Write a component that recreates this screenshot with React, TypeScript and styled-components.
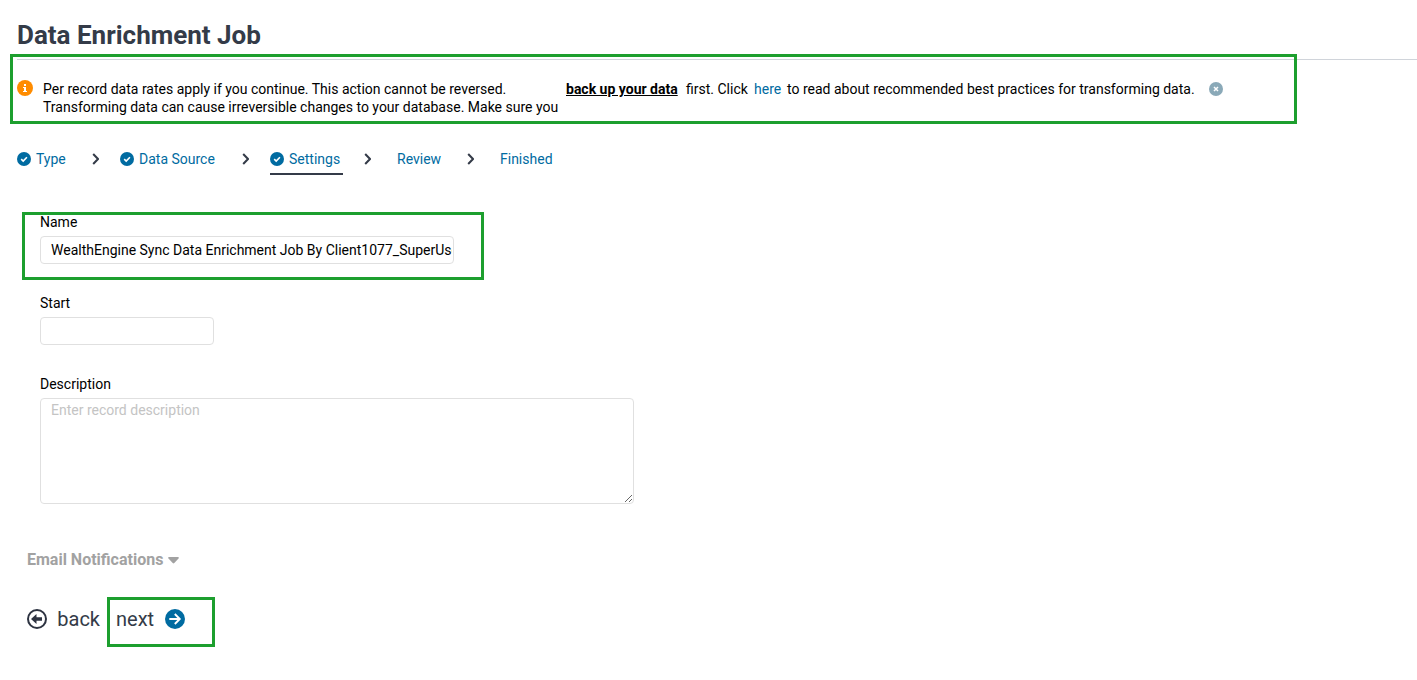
import React from 'react';
import styled, { createGlobalStyle } from 'styled-components';

const GlobalStyle = createGlobalStyle`
  *, *::before, *::after { box-sizing: border-box; }
  body {
    margin: 0;
    background: #fff;
    color: #000;
    font: 14px/18px "HK Grotesk", Roboto, sans-serif;
  }
  button, input, textarea { font: inherit; color: inherit; }
`;

const Page = styled.main`
  padding: 0 0 48px 17px;
`;

const Header = styled.header`
  padding: 19px 0 8px;
  border-bottom: 1px solid #d0d4da;
`;

const Title = styled.h1`
  margin: 0;
  font-size: 26px;
  line-height: 32px;
  font-weight: 700;
  color: #343b48;
`;

const Highlight = styled.div<{ $inset: string }>`
  position: relative;
  &::after {
    content: '';
    position: absolute;
    inset: ${(p) => p.$inset};
    border: 3px solid #1d9f2e;
    pointer-events: none;
  }
`;

const Banner = styled.div`
  display: flex;
  align-items: flex-start;
  gap: 5px;
  padding: 20px 0 8px;
  white-space: nowrap;
`;

const InfoIcon = styled.svg`
  flex: none;
  width: 16px;
  height: 16px;
  margin-right: 5px;
`;

const BannerText = styled.span<{ $width: number; $wrap?: boolean }>`
  flex: none;
  width: ${(p) => p.$width}px;
  white-space: ${(p) => (p.$wrap ? 'normal' : 'nowrap')};
`;

const BannerLink = styled.a<{ $width: number; $strong?: boolean }>`
  flex: none;
  width: ${(p) => p.$width}px;
  color: ${(p) => (p.$strong ? '#000' : '#006ba1')};
  font-weight: ${(p) => (p.$strong ? 700 : 400)};
  text-decoration: ${(p) => (p.$strong ? 'underline' : 'none')};
`;

const CloseButton = styled.button`
  display: flex;
  margin: 2px 0 0 5px;
  padding: 0;
  border: 0;
  background: none;
  cursor: pointer;
`;

const Steps = styled.ol`
  display: flex;
  align-items: flex-start;
  margin: 0;
  padding: 26px 0 38px;
  list-style: none;
`;

const StepItem = styled.li`
  display: flex;
`;

const StepLink = styled.a<{ $width: number; $current?: boolean }>`
  display: flex;
  align-items: flex-start;
  gap: 5px;
  width: ${(p) => p.$width}px;
  height: 25px;
  padding: 0 5px 0 0;
  border-bottom: 2px solid ${(p) => (p.$current ? '#343b48' : 'transparent')};
  color: #006ba1;
  text-decoration: none;
  white-space: nowrap;
  svg { flex: none; margin-top: 2px; }
`;

const StepLabel = styled.span<{ $indent?: boolean }>`
  padding-left: ${(p) => (p.$indent ? 5 : 0)}px;
`;

const Separator = styled.svg`
  width: 7px;
  height: 12px;
  margin: 3px 21px 0 21px;
`;

const Form = styled.form`
  padding: 0 23px 0 23px;
`;

const Fields = styled.div`
  display: flex;
  flex-direction: column;
  align-items: flex-start;
  gap: 30px;
`;

const Field = styled.div`
  display: flex;
  flex-direction: column;
  gap: 5px;
`;

const Input = styled.input<{ $width: number }>`
  width: ${(p) => p.$width}px;
  height: 28px;
  padding: 0 1px 0 10px;
  border: 1px solid #e0e0e0;
  border-radius: 4px;
  background: #fff;
`;

const TextArea = styled.textarea`
  display: block;
  width: 594px;
  height: 106px;
  padding: 2px 10px;
  border: 1px solid #e0e0e0;
  border-radius: 4px;
  background: #fff;
  &::placeholder { color: #c4c4c4; opacity: 1; }
`;

const Footer = styled.div`
  padding: 46px 10px 0;
`;

const Disclosure = styled.button`
  display: flex;
  align-items: center;
  gap: 5px;
  padding: 0;
  border: 0;
  background: none;
  color: #a2a2a2;
  font-size: 16px;
  line-height: 20px;
  font-weight: 700;
  cursor: pointer;
`;

const Actions = styled.div`
  display: flex;
  gap: 16px;
  padding-top: 37px;
`;

const ActionButton = styled.button<{ $width: number }>`
  display: flex;
  align-items: center;
  justify-content: space-between;
  width: ${(p) => p.$width}px;
  padding: 0;
  border: 0;
  background: none;
  color: #343b48;
  font-size: 20px;
  line-height: 24px;
  white-space: nowrap;
  cursor: pointer;
`;

const CheckIcon = () => (
  <svg width="14" height="14" viewBox="0 0 14 14" aria-hidden="true">
    <circle cx="7" cy="7" r="7" fill="#006ba1" />
    <path d="M4.2 7.2l2 1.9 3.7-3.9" fill="none" stroke="#fff" strokeWidth="1.6" />
  </svg>
);

const steps = [
  { label: 'Type', width: 54, done: true },
  { label: 'Data Source', width: 101, done: true },
  { label: 'Settings', width: 73, done: true, current: true },
  { label: 'Review', width: 54 },
  { label: 'Finished', width: 62 },
];

export default function App() {
  return (
    <>
      <GlobalStyle />
      <Page>
        <Header>
          <Title>Data Enrichment Job</Title>
        </Header>

        <Highlight $inset="-6px 120px 0 -7px">
          <Banner>
            <InfoIcon viewBox="0 0 16 16" aria-hidden="true">
              <circle cx="8" cy="8" r="8" fill="#ff8c00" />
              <path d="M7 4h2v2H7zM6 7h3v4h1v1H6v-1h1V8H6z" fill="#fff" />
            </InfoIcon>
            <BannerText $width={518} $wrap>
              Per record data rates apply if you continue. This action cannot be reversed.
              <br />
              Transforming data can cause irreversible changes to your database. Make sure you
            </BannerText>
            <BannerLink href="#backup" $width={115} $strong>back up your data</BannerLink>
            <BannerText $width={63}>first. Click</BannerText>
            <BannerLink href="#best-practices" $width={28}>here</BannerLink>
            <BannerText $width={412}>
              to read about recommended best practices for transforming data.
            </BannerText>
            <CloseButton type="button" aria-label="Dismiss">
              <svg width="14" height="14" viewBox="0 0 14 14">
                <circle cx="7" cy="7" r="7" fill="#8aa9b8" />
                <path d="M5 5l4 4M9 5L5 9" stroke="#fff" strokeWidth="1.5" />
              </svg>
            </CloseButton>
          </Banner>
        </Highlight>

        <nav aria-label="Progress">
          <Steps>
            {steps.map((s, i) => (
              <StepItem key={s.label}>
                {i > 0 && (
                  <Separator viewBox="0 0 7 12" aria-hidden="true">
                    <path d="M1.2 1L6 6l-4.800 5" fill="none" stroke="#343b48" strokeWidth="2" />
                  </Separator>
                )}
                <StepLink
                  href={`#step-${i + 1}`}
                  $width={s.width}
                  $current={s.current}
                  aria-current={s.current ? 'step' : undefined}
                >
                  {s.done && <CheckIcon />}
                  <StepLabel $indent={!s.done}>{s.label}</StepLabel>
                </StepLink>
              </StepItem>
            ))}
          </Steps>
        </nav>

        <Form onSubmit={(e) => e.preventDefault()}>
          <Fields>
            <Highlight $inset="-1px -30px -16px -18px">
              <Field>
                <label htmlFor="name">Name</label>
                <Input
                  id="name"
                  $width={414}
                  defaultValue="WealthEngine Sync Data Enrichment Job By Client1077_SuperUser"
                />
              </Field>
            </Highlight>
            <Field>
              <label htmlFor="start">Start</label>
              <Input id="start" $width={174} />
            </Field>
            <Field>
              <label htmlFor="description">Description</label>
              <TextArea id="description" placeholder="Enter record description" />
            </Field>
          </Fields>
        </Form>

        <Footer>
          <Disclosure type="button" aria-expanded="false">
            Email Notifications
            <svg width="11" height="7" viewBox="0 0 11 7" aria-hidden="true">
              <path d="M1 0h9q1.400.5.5 1.500L6.300 6q-.8.800-1.600 0L.5 1.500Q-.4.500 1 0z" fill="#a2a2a2" />
            </svg>
          </Disclosure>
          <Actions>
            <ActionButton type="button" $width={73}>
              <svg width="20" height="20" viewBox="0 0 20 20" aria-hidden="true">
                <circle cx="10" cy="10" r="9" fill="none" stroke="#2d3341" strokeWidth="2" />
                <path d="M4 10l5.500-5v3.300H15v3.400H9.500V15z" fill="#2d3341" />
              </svg>
              back
            </ActionButton>
            <Highlight $inset="-10px -30px -16px -9px">
              <ActionButton type="button" $width={69}>
                next
                <svg width="20" height="20" viewBox="0 0 21 21" aria-hidden="true">
                  <circle cx="10.500" cy="10.500" r="10.500" fill="#006ba1" />
                  <path d="M4.500 10.500h11M10.300 5.300l5.200 5.200-5.200 5.200" fill="none" stroke="#fff" strokeWidth="2" />
                </svg>
              </ActionButton>
            </Highlight>
          </Actions>
        </Footer>
      </Page>
    </>
  );
}
